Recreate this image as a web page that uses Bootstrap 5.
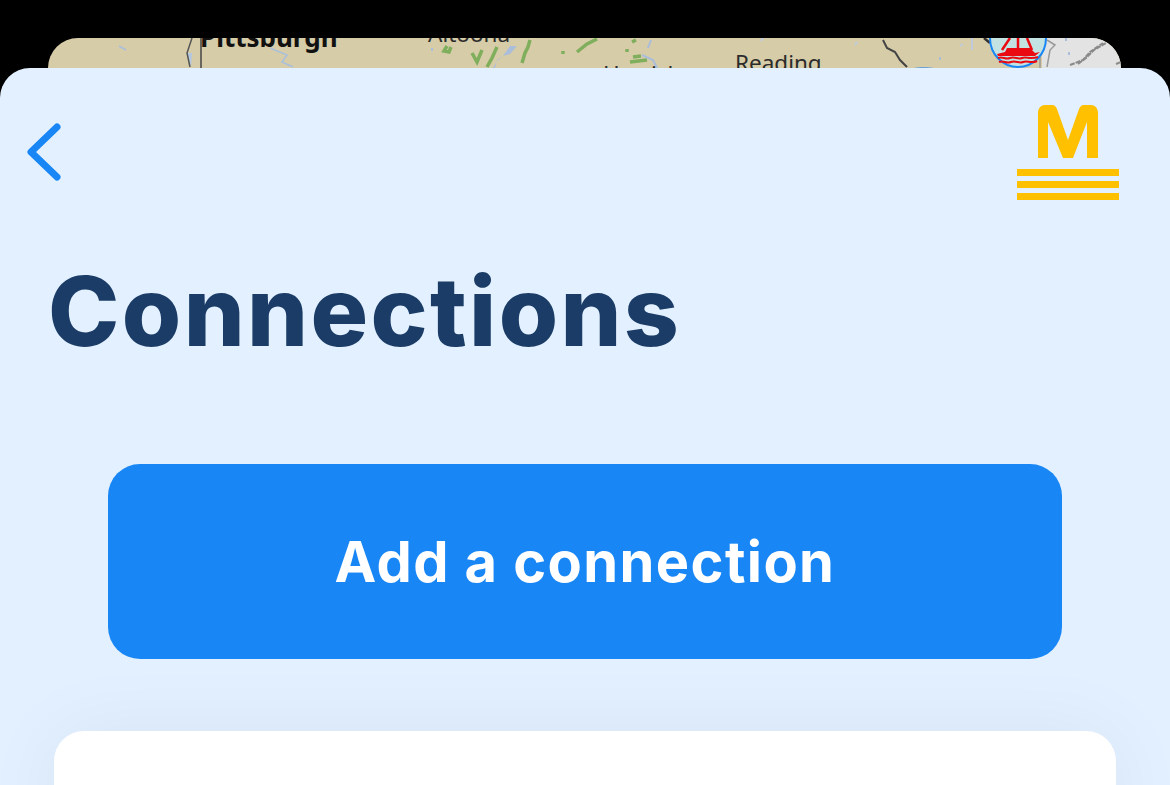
<!DOCTYPE html>
<html lang="en">
<head>
    <meta charset="UTF-8"/>
    <meta name="viewport" content="width=device-width, initial-scale=1.0"/>
    <title>Connections</title>
    <link href="https://cdn.jsdelivr.net/npm/bootstrap@5.3.0/dist/css/bootstrap.min.css" rel="stylesheet"/>
    <style>
        html, body { height: 100%; }
        body { background: #000; overflow: hidden; font-family: Inter, "Liberation Sans", sans-serif; }
        .map-peek { position: relative; height: 60px; margin: 38px 49px -30px 48px; background: #d6cca8; border-radius: 30px 30px 0 0; overflow: hidden; }
        .map-art { position: absolute; left: 0; top: 0; }
        .map-label { position: absolute; color: #2b2b2b; font-family: "Noto Sans", sans-serif; font-size: 22.5px; white-space: nowrap; line-height: 1; }
        .map-pittsburgh { left: 152px; top: -14px; font-size: 26px; font-weight: 700; color: #111; }
        .map-altoona { left: 380px; top: -15px; }
        .map-harrisburg { left: 555px; top: 25px; }
        .map-reading { left: 687px; top: 14px; }
        .sheet { position: relative; height: 717px; background: #e3f0ff; border-radius: 30px 30px 0 0; overflow: hidden; }
        .sheet-head { height: 195px; padding: 37px 50px 0 27px; }
        .page-title { margin: 0; padding-left: 48px; color: #1a3c66; font-size: 96px; font-weight: 800; line-height: 1; letter-spacing: 2.4px; }
        .add-wrap { margin-top: 105px; }
        .add-btn { height: 195px; margin: 0 108px; background: #1886f5; border: 0; border-radius: 32px; color: #fff; font-size: 56px; font-weight: 700; letter-spacing: 1.4px; }
        .add-btn:hover { background: #1886f5; color: #fff; }
        .conn-panel { height: 120px; margin: 72px 54px 0; background: #fff; border-radius: 30px 30px 0 0; box-shadow: 0 0 80px rgba(0, 30, 60, .055); }
    </style>
</head>
<body>

<!-- map behind the sheet, svg uses page coordinates -->
<div class="map-peek">
    <svg class="map-art" width="1073" height="60" viewBox="48 38 1073 60" fill="none">
        <rect x="1042" y="38" width="80" height="60" fill="#e3e3e3"/>
        <!-- left border and rivers -->
        <path d="M187 53l4 14 1-14z" fill="#b4c8e2"/>
        <path d="M192 38l-5 15 3 14" stroke="#555" stroke-width="1.5"/>
        <path d="M201 38v30" stroke="#444" stroke-width="1.5"/>
        <path d="M119 46l7 4M270 48l17 7-5 7 11 5" stroke="#a9bfdc" stroke-width="1.5"/>
        <!-- ridges round altoona -->
        <path d="M447 46l-3 5 5 1 2-5M472 53l5 9 5-12M487 67l5-9 5-11M522 63l3-10 3-6 2-7M563 51v3M577 52l10-8 10-5M632 42l4-2M627 49v3M630 62l17-2M633 57l8-1" stroke="#7fae5c" stroke-width="3.5"/>
        <path d="M495 68l2-8 6-4 7-2 7-8h-7l-7 10-6 5-4 7z" fill="#aabddb"/>
        <path d="M642 55l11 5 4 8M651 40l-3 8M432 48v3" stroke="#aabddb" stroke-width="2"/>
        <!-- state line, east -->
        <path d="M883 40l4 8 8 4 5 8 7 7" stroke="#444" stroke-width="2"/>
        <path d="M960 46l3-2M972 38v12M857 42l-2 3M763 38l-2 3" stroke="#bfcbdc" stroke-width="2"/>
        <path d="M914 68c3-1 15-1 20 0z" fill="#4d93e0"/>
        <path d="M984 38l6 5" stroke="#333" stroke-width="2.5"/>
        <path d="M940 57v3M1066 38v3M1069 52v3" stroke="#aabddb" stroke-width="2"/>
        <!-- coast and contours -->
        <path d="M1047 40l8 5-5 5-3 17M1040 57v11" stroke="#999" stroke-width="1.5"/>
        <path d="M1070 65l13-5 7-8 13-9M1078 64l8-6 8-8 12-7M1116 64l5-2" stroke="#8a8a8a" stroke-width="2" stroke-dasharray="5 1"/>
        <!-- buoy marker -->
        <ellipse cx="1018" cy="38" rx="28" ry="29" fill="#c3e3e3" stroke="#1886f5" stroke-width="2"/>
        <path d="M1010 38l-8 12M1018 38v12M1027 38l5 12" stroke="#ea0a12" stroke-width="2.5"/>
        <path d="M1007 48h23l5 5 5-1-5 4h-37l-1-2 8-2z" fill="#ea0a12"/>
        <path d="M998 58c5-2 7 2 12 0s8 2 12 0 8 2 16-1M999 62c5-2 7 2 12 0s8 2 12 0 8 2 14-1" stroke="#ea0a12" stroke-width="2"/>
    </svg>
    <span class="map-label map-pittsburgh">Pittsburgh</span>
    <span class="map-label map-altoona">Altoona</span>
    <span class="map-label map-harrisburg">Harrisburg</span>
    <span class="map-label map-reading">Reading</span>
</div>

<div class="sheet">
    <div class="sheet-head d-flex justify-content-between align-items-start">
        <svg width="36" height="80" viewBox="27 105 36 80" fill="none">
            <path d="M57 127L31 152l26 25" stroke="#1886f5" stroke-width="7" stroke-linecap="round" stroke-linejoin="round"/>
        </svg>
        <svg width="103" height="96" viewBox="0 0 103 96" fill="#ffc000">
            <path d="M21 53V8c0-5 3-8 7-8h7c3 0 4 2 5 4l11 31L62 4c1-2 2-4 5-4h7c4 0 7 3 7 8v45H70V17L56 53H46L31 17v36z"/>
            <rect y="64" width="102" height="7"/><rect y="76" width="102" height="7"/><rect y="88" width="102" height="7"/>
        </svg>
    </div>
    <h1 class="page-title">Connections</h1>
    <div class="d-grid add-wrap">
        <button type="button" class="btn add-btn">Add a connection</button>
    </div>
    <div class="conn-panel"></div>
</div>

</body>
</html>
